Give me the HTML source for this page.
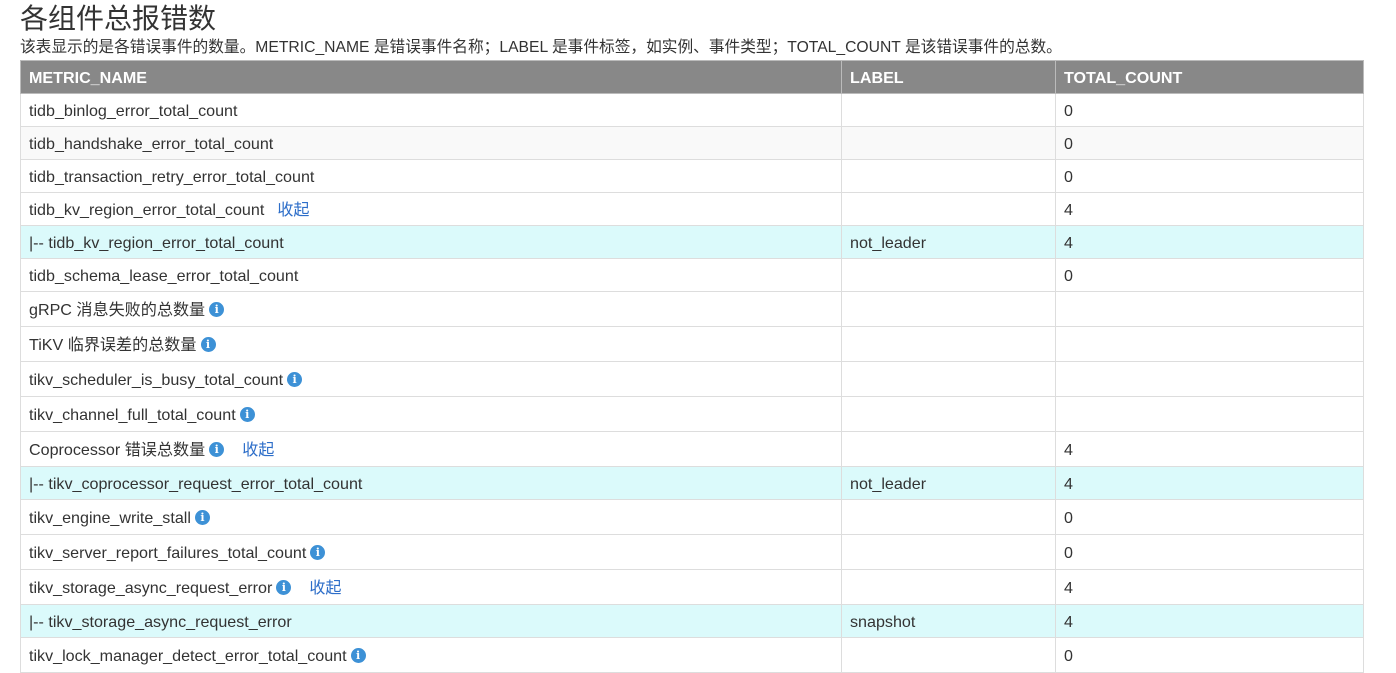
<!DOCTYPE html><html><head><meta charset="utf-8"><style>
body{margin:0;background:#fff;font-family:"Liberation Sans","Noto Sans CJK SC",sans-serif;color:#333;width:1396px;height:666px;overflow:hidden;position:relative}
h1{position:absolute;left:20px;top:2px;margin:0;font-size:28px;line-height:34px;font-weight:normal;color:#333}
.d{position:absolute;left:20px;top:38px;font-size:15.7px;line-height:20px;color:#333;white-space:nowrap}
table{position:absolute;left:20px;top:60px;border-collapse:collapse;width:1344px;font-size:16.1px}
td,th{border:1px solid #ddd;padding:2px 0 0 8px;text-align:left;white-space:nowrap;line-height:20px;vertical-align:middle;box-sizing:border-box}
th{background:#888;color:#fff;font-weight:bold;height:33px;border-color:#bbb}
td{height:33px}
tr.i td{height:35px}
tr.g td{background:#f9f9f9}
tr.c td{background:#dbfafb}
.ic{display:inline-block;width:15px;height:15px;border-radius:50%;background:#3d91d6;color:#fff;font:bold 11px/15px "DejaVu Serif",serif;text-align:center;vertical-align:2px;margin-left:4px}
a{color:#2d6ec9;margin-left:13px;text-decoration:none}
</style></head><body>
<h1>各组件总报错数</h1>
<div class="d">该表显示的是各错误事件的数量。METRIC_NAME 是错误事件名称；LABEL 是事件标签，如实例、事件类型；TOTAL_COUNT 是该错误事件的总数。</div>
<table>
<colgroup><col style="width:821px"><col style="width:214px"><col></colgroup>
<tr><th>METRIC_NAME</th><th>LABEL</th><th>TOTAL_COUNT</th></tr>
<tr><td>tidb_binlog_error_total_count</td><td></td><td>0</td></tr>
<tr class="g"><td>tidb_handshake_error_total_count</td><td></td><td>0</td></tr>
<tr><td>tidb_transaction_retry_error_total_count</td><td></td><td>0</td></tr>
<tr><td>tidb_kv_region_error_total_count<a>收起</a></td><td></td><td>4</td></tr>
<tr class="c"><td>|-- tidb_kv_region_error_total_count</td><td>not_leader</td><td>4</td></tr>
<tr><td>tidb_schema_lease_error_total_count</td><td></td><td>0</td></tr>
<tr class="i"><td>gRPC 消息失败的总数量<span class="ic">i</span></td><td></td><td></td></tr>
<tr class="i"><td>TiKV 临界误差的总数量<span class="ic">i</span></td><td></td><td></td></tr>
<tr class="i"><td>tikv_scheduler_is_busy_total_count<span class="ic">i</span></td><td></td><td></td></tr>
<tr class="i"><td>tikv_channel_full_total_count<span class="ic">i</span></td><td></td><td></td></tr>
<tr class="i"><td>Coprocessor 错误总数量<span class="ic">i</span><a style="margin-left:18px">收起</a></td><td></td><td>4</td></tr>
<tr class="c"><td>|-- tikv_coprocessor_request_error_total_count</td><td>not_leader</td><td>4</td></tr>
<tr class="i"><td>tikv_engine_write_stall<span class="ic">i</span></td><td></td><td>0</td></tr>
<tr class="i"><td>tikv_server_report_failures_total_count<span class="ic">i</span></td><td></td><td>0</td></tr>
<tr class="i"><td>tikv_storage_async_request_error<span class="ic">i</span><a style="margin-left:18px">收起</a></td><td></td><td>4</td></tr>
<tr class="c"><td>|-- tikv_storage_async_request_error</td><td>snapshot</td><td>4</td></tr>
<tr class="i"><td>tikv_lock_manager_detect_error_total_count<span class="ic">i</span></td><td></td><td>0</td></tr>
</table>
</body></html>
